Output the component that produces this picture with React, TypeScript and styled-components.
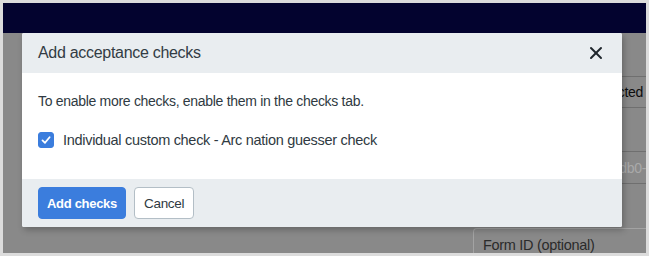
import React, { useState } from "react";
import styled, { createGlobalStyle } from "styled-components";
import { X } from "lucide-react";

const GlobalStyle = createGlobalStyle`
  html, body {
    margin: 0;
    padding: 0;
    background: #dcdcdc;
  }
  * {
    box-sizing: border-box;
  }
`;

const FONT = `"Liberation Sans", Arial, sans-serif`;

const Frame = styled.div`
  width: 649px;
  height: 256px;
  padding: 3px;
  background: #dcdcdc;
  font-family: ${FONT};
`;

const Page = styled.div`
  display: flex;
  flex-direction: column;
  height: 100%;
`;

const Navbar = styled.div`
  height: 30px;
  background: #03032f;
  flex-shrink: 0;
`;

// dimmed page behind the modal
const Content = styled.div`
  position: relative;
  flex: 1;
  display: grid;
  grid-template-columns: 470px minmax(0, 1fr);
  background: #898989;
  overflow: hidden;
`;

const SidePanel = styled.div`
  grid-column: 2;
  min-width: 0;
  display: flex;
  flex-direction: column;
  padding-top: 43px;
`;

const TableRow = styled.div<{ h: number; faded?: boolean }>`
  height: ${({ h }) => h}px;
  border-top: 1px solid #6f6f6f;
  display: flex;
  align-items: center;
  justify-content: flex-end;
  padding: 0 ${({ faded }) => (faded ? 0 : 3)}px 0 10px;
  font-size: 14px;
  letter-spacing: -0.3px;
  white-space: nowrap;
  overflow: hidden;
  color: ${({ faded }) => (faded ? "#a9a9a9" : "#0d0d0d")};
`;

const TableEnd = styled.div`
  border-top: 1px solid #6f6f6f;
`;

const FormBox = styled.div`
  margin-top: 44px;
  flex: 1;
  border-top: 1px solid #a3a3a3;
  border-left: 1px solid #a3a3a3;
  border-top-left-radius: 4px;
  padding: 8px 0 0 9px;
  font-size: 14.5px;
  letter-spacing: -0.3px;
  color: #2b2b2b;
  white-space: nowrap;
`;

const Modal = styled.div`
  position: absolute;
  top: 0;
  left: 19px;
  width: 600px;
  background: #fff;
  border-radius: 2px;
  box-shadow: 2px 3px 6px rgba(0, 0, 0, 0.25);
  overflow: hidden;
`;

const ModalHeader = styled.div`
  height: 40px;
  padding: 0 16px;
  display: flex;
  align-items: center;
  justify-content: space-between;
  background: #e9edf0;
`;

const ModalTitle = styled.h2`
  margin: 0;
  font-size: 16px;
  letter-spacing: -0.3px;
  font-weight: 400;
  color: #323c44;
`;

const CloseButton = styled.button`
  width: 20px;
  height: 20px;
  padding: 0;
  border: none;
  background: transparent;
  display: flex;
  align-items: center;
  justify-content: center;
  color: #1f262c;
  cursor: pointer;
`;

const ModalBody = styled.div`
  padding: 16px 16px 27px;
  display: flex;
  flex-direction: column;
  gap: 15px;
  color: #2f3a42;
`;

const Hint = styled.p`
  margin: 0;
  font-size: 14px;
  letter-spacing: -0.3px;
  line-height: 24px;
`;

const CheckRow = styled.label`
  display: flex;
  align-items: center;
  gap: 9px;
  height: 24px;
  font-size: 14.5px;
  letter-spacing: -0.3px;
  cursor: pointer;
`;

const CheckBox = styled.span<{ checked: boolean }>`
  width: 16px;
  height: 16px;
  border-radius: 3px;
  flex-shrink: 0;
  display: flex;
  align-items: center;
  justify-content: center;
  background: ${({ checked }) => (checked ? "#3b7ddd" : "#fff")};
  border: 1px solid ${({ checked }) => (checked ? "#3b7ddd" : "#b8c2cc")};
`;

const ModalFooter = styled.div`
  height: 48px;
  padding: 0 16px;
  display: flex;
  align-items: center;
  gap: 8px;
  background: #e9edf0;
`;

const Button = styled.button<{ primary?: boolean }>`
  height: 32px;
  padding: 0 ${({ primary }) => (primary ? 8 : 9)}px;
  border-radius: 4px;
  font-family: ${FONT};
  font-size: ${({ primary }) => (primary ? 13 : 13.5)}px;
  letter-spacing: -0.3px;
  font-weight: ${({ primary }) => (primary ? 700 : 400)};
  color: ${({ primary }) => (primary ? "#fff" : "#2f3a42")};
  background: ${({ primary }) => (primary ? "#3b7ddd" : "#fff")};
  border: 1px solid ${({ primary }) => (primary ? "#3b7ddd" : "#b3bec6")};
  cursor: pointer;
`;

const App: React.FC = () => {
  const [checked, setChecked] = useState(true);

  return (
    <>
      <GlobalStyle />
      <Frame>
        <Page>
          <Navbar />
          <Content>
            <SidePanel>
              <TableRow h={31}>Selected</TableRow>
              <TableRow h={44} />
              <TableRow h={32} faded>
                c6a1e2d4-7f3b-4db0-
              </TableRow>
              <TableEnd />
              <FormBox>Form ID (optional)</FormBox>
            </SidePanel>

            <Modal role="dialog">
              <ModalHeader>
                <ModalTitle>Add acceptance checks</ModalTitle>
                <CloseButton aria-label="Close">
                  <X size={20} strokeWidth={2.4} />
                </CloseButton>
              </ModalHeader>
              <ModalBody>
                <Hint>To enable more checks, enable them in the checks tab.</Hint>
                <CheckRow onClick={() => setChecked(!checked)}>
                  <CheckBox checked={checked}>
                    {checked && (
                      <svg width="12" height="12" viewBox="0 0 12 12">
                        <path
                          d="M2.5 6.4 L5 8.8 L9.6 3.2"
                          fill="none"
                          stroke="#fff"
                          strokeWidth="1.8"
                          strokeLinecap="round"
                          strokeLinejoin="round"
                        />
                      </svg>
                    )}
                  </CheckBox>
                  Individual custom check - Arc nation guesser check
                </CheckRow>
              </ModalBody>
              <ModalFooter>
                <Button primary>Add checks</Button>
                <Button>Cancel</Button>
              </ModalFooter>
            </Modal>
          </Content>
        </Page>
      </Frame>
    </>
  );
};

export default App;
